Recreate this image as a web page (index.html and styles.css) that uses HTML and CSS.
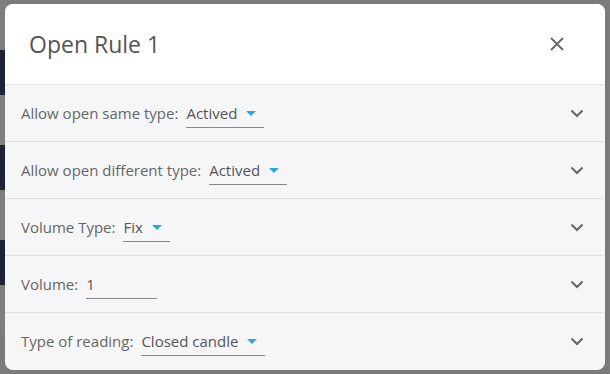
FILE: index.html
```html
<!DOCTYPE html>
<html lang="en">
<head>
    <meta charset="UTF-8">
    <title>Open Rule 1</title>
    <link rel="stylesheet" href="styles.css">
</head>
<body>
    <div class="pagina">
        <div class="lateral">
            <div class="bloco claro"></div>
            <div class="bloco escuro"></div>
            <div class="bloco claro"></div>
            <div class="bloco escuro"></div>
            <div class="bloco claro"></div>
            <div class="bloco escuro"></div>
            <div class="bloco claro"></div>
        </div>
    </div>

    <div class="modal">
        <div class="cabecalho">
            <h1 class="titulo">Open Rule 1</h1>
            <button class="fechar">
                <svg width="16" height="16" viewBox="0 0 16 16"><path d="M2 2 L14 14 M14 2 L2 14" stroke="#666" stroke-width="1.8" fill="none"/></svg>
            </button>
        </div>
        <div class="linha">
            <span class="rotulo">Allow open same type:</span>
            <span class="campo">Actived <i class="seta"></i></span>
            <svg class="chevron" width="14" height="9" viewBox="0 0 14 9"><path d="M1.5 1.5 L7 7 L12.5 1.5" stroke="#666" stroke-width="2" fill="none"/></svg>
        </div>
        <div class="linha">
            <span class="rotulo">Allow open different type:</span>
            <span class="campo">Actived <i class="seta"></i></span>
            <svg class="chevron" width="14" height="9" viewBox="0 0 14 9"><path d="M1.5 1.5 L7 7 L12.5 1.5" stroke="#666" stroke-width="2" fill="none"/></svg>
        </div>
        <div class="linha">
            <span class="rotulo">Volume Type:</span>
            <span class="campo">Fix <i class="seta"></i></span>
            <svg class="chevron" width="14" height="9" viewBox="0 0 14 9"><path d="M1.5 1.5 L7 7 L12.5 1.5" stroke="#666" stroke-width="2" fill="none"/></svg>
        </div>
        <div class="linha">
            <span class="rotulo">Volume:</span>
            <span class="campo entrada">1</span>
            <svg class="chevron" width="14" height="9" viewBox="0 0 14 9"><path d="M1.5 1.5 L7 7 L12.5 1.5" stroke="#666" stroke-width="2" fill="none"/></svg>
        </div>
        <div class="linha ultima">
            <span class="rotulo">Type of reading:</span>
            <span class="campo">Closed candle <i class="seta"></i></span>
            <svg class="chevron" width="14" height="9" viewBox="0 0 14 9"><path d="M1.5 1.5 L7 7 L12.5 1.5" stroke="#666" stroke-width="2" fill="none"/></svg>
        </div>
    </div>
</body>
</html>
```

FILE: styles.css
```css
body {
    margin: 0;
    background-color: #7b7b7b;
    font-family: "Open Sans", "Noto Sans", sans-serif;
    height: 374px;
    overflow: hidden;
}
.pagina {
    height: 374px;
    display: flex;
}
.lateral {
    width: 6px;
    display: flex;
    flex-direction: column;
}
.bloco.claro {
    height: 50px;
    background-color: #7e7e7e;
}
.bloco.escuro {
    height: 45px;
    background-color: #1c2436;
}
.modal {
    position: absolute;
    left: 5px;
    top: 4px;
    width: 600px;
    height: 366px;
    background-color: #f6f6f8;
    border-radius: 8px;
    overflow: hidden;
}
.cabecalho {
    height: 80px;
    background-color: #fff;
    border-bottom: 1px solid #e2e2e4;
    display: flex;
    align-items: center;
    justify-content: space-between;
    padding: 0 40px 0 24px;
}
.titulo {
    margin: 0;
    font-size: 23px;
    font-weight: 400;
    color: #555;
}
.fechar {
    background: none;
    border: none;
    padding: 0;
    display: flex;
}
.linha {
    height: 56px;
    border-bottom: 1px solid #e2e2e4;
    display: flex;
    align-items: center;
    padding: 0 21px 0 16px;
    font-size: 15px;
    line-height: 20px;
    color: #666;
}
.linha.ultima {
    border-bottom: none;
}
.rotulo {
    margin-right: 8px;
}
.campo {
    display: flex;
    align-items: center;
    gap: 9px;
    padding: 5px 8px 4px 0;
    margin-top: 0;
    border-bottom: 1px solid #8a8a8a;
    color: #555;
}
.campo.entrada {
    width: 63px;
}
.seta {
    width: 0;
    height: 0;
    border-left: 5px solid transparent;
    border-right: 5px solid transparent;
    border-top: 5px solid #29a8e0;
}
.chevron {
    margin-left: auto;
}
```
